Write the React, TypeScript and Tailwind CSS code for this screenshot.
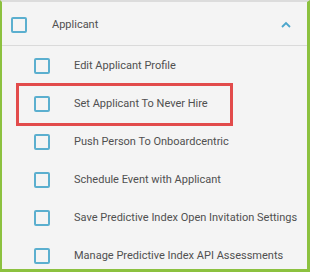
const permissions = [
  "Edit Applicant Profile",
  "Set Applicant To Never Hire",
  "Push Person To Onboardcentric",
  "Schedule Event with Applicant",
  "Save Predictive Index Open Invitation Settings",
  "Manage Predictive Index API Assessments",
];

function Box() {
  return (
    <span className="block h-4 w-4 shrink-0 rounded-[2px] border-2 border-[#5bafcf] bg-[#f4f4f4]" />
  );
}

export default function App() {
  return (
    <div className="flex h-[272px] w-[310px] flex-col overflow-hidden border-b-[3px] border-l-2 border-r-[3px] border-t-2 border-b-[#8cc13f] border-l-[#8cc13f] border-r-[#8cc13f] border-t-[#dcdcdc] bg-[#f4f4f4] font-['Roboto',sans-serif] text-[11px] text-[#505050]">
      <div className="flex h-[44px] shrink-0 items-center border-b border-[#dadada] pl-[9px] pr-[16px] pt-[3px]">
        <Box />
        <span className="ml-[25px] flex-1">Applicant</span>
        <svg width="10" height="7" viewBox="0 0 10 7" className="mb-[1px]">
          <polyline points="1,6 5,2 9,6" fill="none" stroke="#4ba6cc" strokeWidth="1.8" />
        </svg>
      </div>
      <ul className="flex flex-col pt-[1px]">
        {permissions.map((label, i) => (
          <li key={label} className="relative flex h-[38px] items-center pl-[32px]">
            {i === 1 ? (
              <span className="pointer-events-none absolute left-[14px] top-[-2px] h-[43px] w-[217px] border-[3px] border-[#e24b4b]" />
            ) : null}
            <Box />
            <span className="ml-[24px] whitespace-nowrap">{label}</span>
          </li>
        ))}
      </ul>
    </div>
  );
}
